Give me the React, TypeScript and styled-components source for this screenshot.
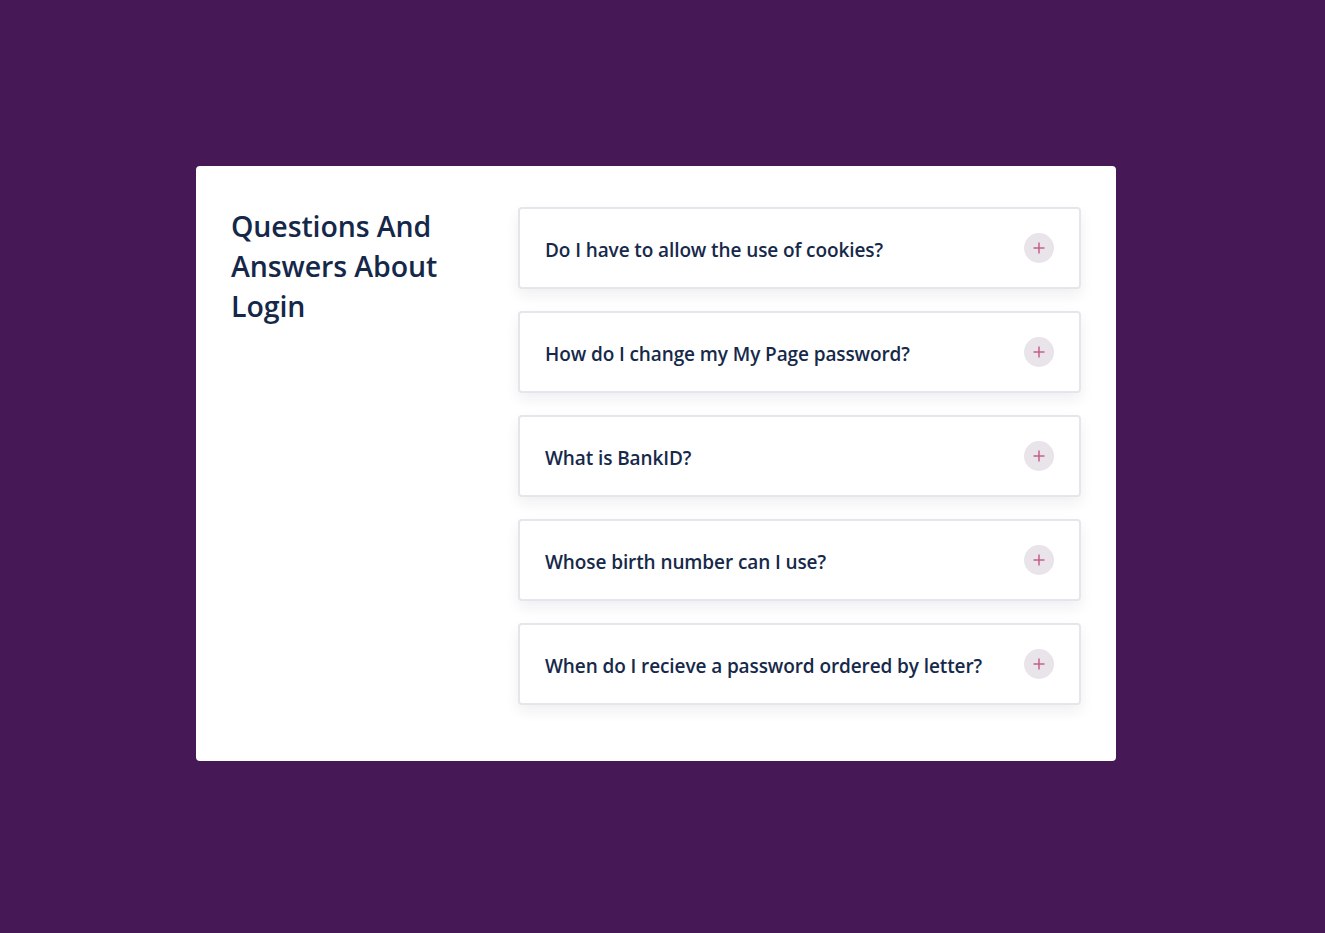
import React from "react";
import styled, { createGlobalStyle } from "styled-components";

const Global = createGlobalStyle`
  html, body { margin: 0; padding: 0; }
  body {
    background: #461956;
    font-family: "Open Sans", "Noto Sans", sans-serif;
    min-height: 933px;
  }
`;

const Page = styled.div`
  display: flex;
  justify-content: center;
  padding-top: 166px;
  padding-right: 13px;
  box-sizing: border-box;
`;

const Card = styled.section`
  width: 920px;
  box-sizing: border-box;
  background: #ffffff;
  border-radius: 4px;
  padding: 41px 35px 56px 35px;
  display: flex;
`;

const TitleCol = styled.div`
  width: 287px;
  flex: none;
`;

const Title = styled.h2`
  margin: -1px 0 0 0;
  font-size: 28.5px;
  line-height: 40px;
  font-weight: 600;
  color: #15284a;
  letter-spacing: -0.1px;
`;

const List = styled.div`
  flex: 1;
  display: flex;
  flex-direction: column;
  gap: 22px;
`;

const Item = styled.button`
  all: unset;
  box-sizing: border-box;
  height: 82px;
  display: flex;
  align-items: center;
  justify-content: space-between;
  padding: 0 25px;
  border: 2px solid #e6e4ec;
  border-radius: 4px;
  background: #fff;
  box-shadow: 0 6px 14px rgba(30, 20, 50, 0.07);
  cursor: pointer;
`;

const Question = styled.span`
  font-size: 19px;
  color: #16294a;
  font-weight: 600;
  letter-spacing: -0.1px;
  padding-top: 3px;
`;

const Plus = styled.span`
  width: 30px;
  height: 30px;
  border-radius: 50%;
  background: #e8e4ea;
  display: flex;
  align-items: center;
  justify-content: center;
  flex: none;
`;

const questions = [
  "Do I have to allow the use of cookies?",
  "How do I change my My Page password?",
  "What is BankID?",
  "Whose birth number can I use?",
  "When do I recieve a password ordered by letter?",
];

export default function App() {
  return (
    <>
      <Global />
      <Page>
        <Card>
          <TitleCol>
            <Title>
              Questions And
              <br />
              Answers About
              <br />
              Login
            </Title>
          </TitleCol>
          <List>
            {questions.map((q) => (
              <Item key={q}>
                <Question>{q}</Question>
                <Plus>
                  <svg width="12" height="12" viewBox="0 0 12 12">
                    <path d="M6 0.5V11.5M0.5 6H11.5" stroke="#c2628c" strokeWidth="1.5" />
                  </svg>
                </Plus>
              </Item>
            ))}
          </List>
        </Card>
      </Page>
    </>
  );
}
